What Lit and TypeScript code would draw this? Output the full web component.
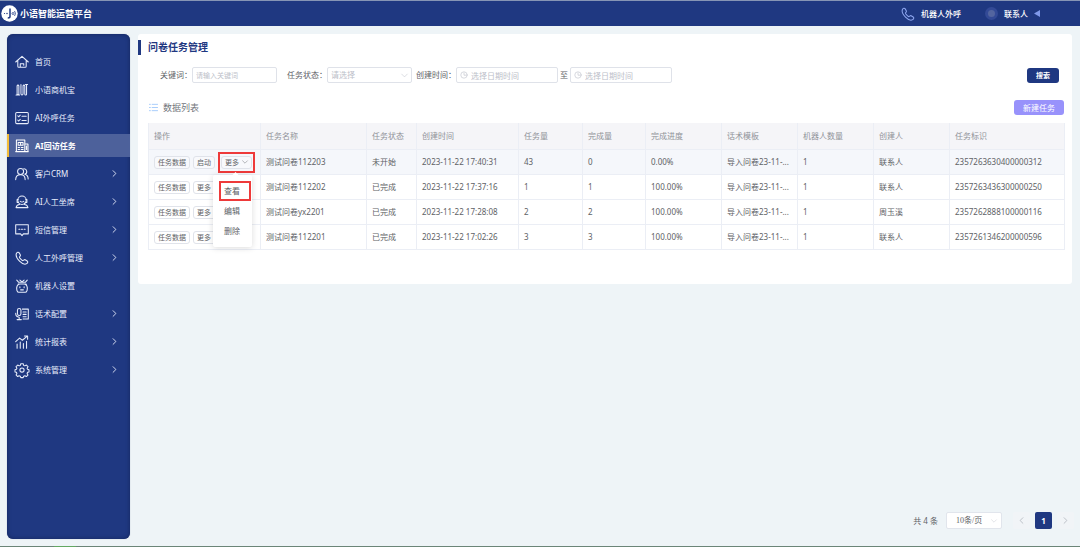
import { LitElement, html, css, svg, nothing } from "lit";
import { customElement } from "lit/decorators.js";
import { classMap } from "lit/directives/class-map.js";

const icons: Record<string, unknown> = {
  home: svg`<path d="M1 10 10 2l9 8M4 8v8q0 1.500 1.500 1.500h9q1.500 0 1.500-1.500V8M7.500 17v-4.500h5v2"/>`,
  biz: svg`<path d="M3 4v12.500h2.500V4a1.300 1.300 0 0 0-2.500 0M8.500 2v13.500a1.500 1.500 0 0 0 3 0V4a1.300 1.300 0 0 1 2.500 0v12a1.200 1.200 0 0 0 2.500 0V3M1.500 17h5M15 2h3"/>`,
  list: svg`<rect x="1" y="2" width="18" height="16" rx="1.500"/><path d="m4 7 1.300 1.300L7.500 6M4 13l1.300 1.300L7.500 12M10 7.500h6M10 13.500h6"/>`,
  visit: svg`<path d="M2 1.500h12V18H2zM14 7h4.500v11H14M4.500 5h7v4h-7zM8 5v4M4.500 12h2M9 12h2.500M4.500 15h2M9 15h2.500M16.300 10v5M1 18h18"/>`,
  people: svg`<circle cx="8" cy="6.500" r="4.300"/><path d="M1 18c0-4.500 2.700-7 7-7s6.500 2.500 6.500 7M12.500 2.500a4 4 0 0 1 1.500 7.800c3 .9 4.800 3.400 4.800 6.700"/>`,
  agent: svg`<circle cx="10" cy="7.500" r="6"/><path d="M4.500 6.500H3v4h2M15.500 6.500H17v4h-2l-2 2.500M7.500 9c1.500 1.200 3.500 1.200 5 0M1.500 18c.5-3 3-4.300 5-4.500M18.500 18c-.5-3-3-4.300-5-4.500M1.500 18h17"/>`,
  sms: svg`<path d="M1 2.500h18v13h-7L10 18l-2-2.500H1zM5.500 9h1.500M9.200 9h1.500M13 9h1.500"/>`,
  phone: svg`<path d="M2 3.500c1-1.800 3-2.300 4-.8l1.700 2.900c.6 1.300-1 2.100-1.300 3-.4 1.200 3.800 5.500 5.100 5.100.9-.3 1.800-1.900 3-1.300l2.900 1.800c1.500 1 .8 2.900-.8 3.900C11.500 21.500-.5 9.500 2 3.500z"/>`,
  robot: svg`<path d="M2.500 1.500 5 4.500M17.500 1.500 15 4.500M7 1.500l3 2.500 3-2.500M5 4.500h10M4.500 7h11l1 1.500M3 10c-2 5 .5 9 2.500 9h9c2 0 4.500-4 2.500-9-1-2-3-3-4-3H7c-1 0-3 1-4 3zM7 11v1.500M13 11v1.500M8 15.500h4"/>`,
  script: svg`<rect x="3.500" y="2" width="5" height="10" rx="2.500"/><path d="M1 9c0 3.500 2 5.500 5 5.500V18M3 18h6M10.500 3H19v14h-7.500M11.500 7H16M11.500 10.500H16M11.500 14H16"/>`,
  chart: svg`<path d="M1 9.500 6.500 4.500l4 3L17.500 1.500M13.500 1.500h4.500V6M3 19v-6M7.500 19v-9M12 19v-7M16.500 19V9"/>`,
  gear: svg`<circle cx="10" cy="10" r="3"/><path d="M8.300 1h3.400l.6 2.400 1.700.7 2.200-1.200 2.400 2.400-1.300 2.100.7 1.700 2 .6v3l-2 .6-.7 1.700 1.200 2.200-2.300 2.200-2.100-1.200-1.700.7-.7 2H8.300l-.7-2-1.700-.7-2.100 1.200-2.300-2.300L2.700 15 2 13.300 0 12.700v-3L2 9.100l.7-1.700-1.200-2.200 2.400-2.300L6 4.100l1.700-.7z"/>`,
  clock: svg`<circle cx="10" cy="10" r="8"/><path d="M10 5v5.500h4.500"/>`,
  right: svg`<path d="m6 2 8 8-8 8"/>`,
  left: svg`<path d="m14 2-8 8 8 8"/>`,
  down: svg`<path d="m2 6 8 8 8-8"/>`,
  rows: svg`<path d="M1 3h2M7 3h12M1 10h2M7 10h12M1 17h2M7 17h12"/>`,
};

const icon = (name: string, cls = "") =>
  html`<svg class="icon ${cls}" viewBox="0 0 20 20" aria-hidden="true">${icons[name]}</svg>`;

const menu: [string, string, boolean][] = [
  ["home", "首页", false],
  ["biz", "小语商机宝", false],
  ["list", "AI外呼任务", false],
  ["visit", "AI回访任务", false],
  ["people", "客户CRM", true],
  ["agent", "AI人工坐席", true],
  ["sms", "短信管理", true],
  ["phone", "人工外呼管理", true],
  ["robot", "机器人设置", false],
  ["script", "话术配置", true],
  ["chart", "统计报表", true],
  ["gear", "系统管理", true],
];

const columns: [string, number][] = [
  ["操作", 112],
  ["任务名称", 106],
  ["任务状态", 50],
  ["创建时间", 102],
  ["任务量", 64],
  ["完成量", 63],
  ["完成进度", 76],
  ["话术模板", 76],
  ["机器人数量", 76],
  ["创建人", 76],
  ["任务标识", 115],
];

const tasks: string[][] = [
  ["测试问卷112203", "未开始", "2023-11-22 17:40:31", "43", "0", "0.00%", "导入问卷23-11-...", "1", "联系人", "2357263630400000312"],
  ["测试问卷112202", "已完成", "2023-11-22 17:37:16", "1", "1", "100.00%", "导入问卷23-11-...", "1", "联系人", "2357263436300000250"],
  ["测试问卷yx2201", "已完成", "2023-11-22 17:28:08", "2", "2", "100.00%", "导入问卷23-11-...", "1", "周玉溪", "2357262888100000116"],
  ["测试问卷112201", "已完成", "2023-11-22 17:02:26", "3", "3", "100.00%", "导入问卷23-11-...", "1", "联系人", "2357261346200000596"],
];

const base = css`
  *, *::before, *::after { box-sizing: border-box; }
  button, input, select { font: inherit; color: inherit; margin: 0; }
  button { cursor: pointer; white-space: nowrap; }
  a { color: inherit; text-decoration: none; }
  .icon { display: block; flex: none; width: 14px; height: 14px; fill: none; stroke: currentColor; stroke-width: 1.5; stroke-linecap: round; stroke-linejoin: round; overflow: visible; }
`;

@customElement("app-sidebar")
class AppSidebar extends LitElement {
  static styles = [base, css`
    :host { display: block; background: #1f3881; color: #e8edfb; border-radius: 6px; box-shadow: inset 0 0 4px #14265c, 0 0 1px #8c98b8; padding: 16px 0; }
    .menu { display: flex; flex-direction: column; gap: 5px; }
    .item { display: flex; align-items: center; gap: 6px; height: 23px; padding: 0 12px 0 6px; border-left: 2px solid transparent; }
    .active { background: #4d619b; border-left-color: #f3bd3a; color: #fff; font-weight: 700; }
    .label { flex: 1; }
    .arrow { width: 7px; height: 7px; stroke-width: 2.5; }
  `];
  render() {
    return html`<nav class="menu">
      ${menu.map(([name, label, sub]) => html`
        <a href="#" class=${classMap({ item: true, active: name === "visit" })}>
          ${icon(name)}<span class="label">${label}</span>${sub ? icon("right", "arrow") : nothing}
        </a>`)}
    </nav>`;
  }
}

@customElement("task-filter")
class TaskFilter extends LitElement {
  static styles = [base, css`
    :host { display: block; }
    .form { display: flex; align-items: center; padding: 0 5px 0 12px; color: #606266; }
    .group { display: flex; align-items: center; }
    .first { margin-right: 10px; }
    .status { margin-right: 4px; }
    .to { margin: 0 2px; }
    .field { display: flex; align-items: center; gap: 3px; height: 16px; padding: 0 3px; border: 1px solid #dfe2e9; border-radius: 2px; background: #fff; color: #bcc0c9; }
    .text, .choice { width: 85px; }
    .text { font-size: 7px; }
    .date { width: 102px; }
    .input { flex: 1; width: 100%; min-width: 0; height: 14px; padding: 0; border: 0; outline: 0; background: none; appearance: none; }
    .input::placeholder { color: #bcc0c9; }
    .small { width: 7px; height: 7px; }
    .clock { width: 8px; height: 8px; }
    .search { margin-left: auto; width: 32px; height: 15px; padding: 0; border: 0; border-radius: 3px; background: #1f3881; color: #fff; font-size: 7px; font-weight: 700; line-height: 15px; }
  `];
  render() {
    return html`<form class="form" @submit=${(e: Event) => e.preventDefault()}>
      <div class="group first">
        <label for="key">关键词：</label>
        <span class="field text"><input class="input" id="key" placeholder="请输入关键词" /></span>
      </div>
      <div class="group status">
        <label for="status">任务状态：</label>
        <span class="field choice">
          <select class="input" id="status"><option>请选择</option></select>${icon("down", "small")}
        </span>
      </div>
      <div class="group">
        <label for="from">创建时间：</label>
        <span class="field date">${icon("clock", "clock")}<input class="input" id="from" placeholder="选择日期时间" /></span>
        <label class="to" for="to">至</label>
        <span class="field date">${icon("clock", "clock")}<input class="input" id="to" placeholder="选择日期时间" /></span>
      </div>
      <button class="search">搜索</button>
    </form>`;
  }
}

@customElement("task-table")
class TaskTable extends LitElement {
  static styles = [base, css`
    :host { display: block; }
    .table { width: 100%; table-layout: fixed; border-collapse: separate; border-spacing: 0; border: 1px solid #ebeef5; border-width: 0 0 0 1px; color: #606266; }
    .th, .td { padding: 0 5px; border: 1px solid #ebeef5; border-width: 0 1px 1px 0; text-align: left; font-weight: 400; white-space: nowrap; line-height: 12px; }
    .th { height: 27px; background: #f5f5f8; color: #909399; }
    .td { height: 25px; }
    .hover .td { background: #f5f7fb; }
    .ops { display: flex; align-items: center; gap: 3px; position: relative; }
    .op { display: flex; align-items: center; gap: 3px; height: 13px; padding: 0 3px; border: 1px solid #e0e3ea; border-radius: 3px; background: #fff; font-size: 7px; line-height: 11px; }
    .hover .op { background: #f8f9fc; }
    .small { width: 6px; height: 6px; }
    .marked { margin: -4px 0; padding: 2px 1px; border: 2px solid #ee3a3a; display: flex; }
    .drop { position: absolute; z-index: 2; left: 59px; top: 19px; width: 39px; padding: 6px; display: flex; flex-direction: column; background: #fff; border-radius: 2px; box-shadow: 0 1px 6px rgba(0, 0, 0, 0.14); }
    .drop::before { content: ""; position: absolute; left: 20px; top: -2px; width: 5px; height: 5px; background: #fff; transform: rotate(45deg); }
    .choice { height: 20px; padding: 0 3px; border: 2px solid transparent; background: none; text-align: left; line-height: 16px; }
    .picked { border-color: #ee3a3a; margin-right: -5px; }
  `];
  render() {
    return html`<table class="table">
      <colgroup>${columns.map(([, w]) => html`<col style="width:${w}px" />`)}</colgroup>
      <thead><tr>${columns.map(([name]) => html`<th class="th" scope="col">${name}</th>`)}</tr></thead>
      <tbody>
        ${tasks.map((task, i) => html`<tr class=${classMap({ hover: i === 0 })}>
          <td class="td"><div class="ops">
            <button class="op">任务数据</button>
            ${i === 0
              ? html`<button class="op">启动</button>
                <span class="marked"><button class="op" aria-expanded="true">更多${icon("down", "small")}</button></span>
                <div class="drop">
                  <button class="choice picked">查看</button>
                  <button class="choice">编辑</button>
                  <button class="choice">删除</button>
                </div>`
              : html`<button class="op">更多${icon("down", "small")}</button>`}
          </div></td>
          ${task.map((value) => html`<td class="td">${value}</td>`)}
        </tr>`)}
      </tbody>
    </table>`;
  }
}

@customElement("app-root")
class AppRoot extends LitElement {
  static styles = [base, css`
    :host { display: flex; flex-direction: column; min-height: 100vh; background: #eef4f7; font: 8px/12px "Noto Sans", "Noto Sans CJK SC", sans-serif; }
    .top { display: flex; align-items: center; height: 26px; padding: 0 39px 0 1px; border-top: 1px solid #8695b5; background: #1f3881; color: #fff; }
    .brand { display: flex; align-items: center; gap: 2px; margin: 0; font-size: 9px; font-weight: 700; }
    .logo { width: 17px; height: 17px; flex: none; }
    .link { display: flex; align-items: center; gap: 6px; font-weight: 500; }
    .call { margin-left: auto; margin-right: 24px; }
    .call .icon { color: #8ea6ef; }
    .avatar { width: 13px; height: 13px; border-radius: 50%; border: 3px solid #334a96; background: #53659f; }
    .tri { width: 7px; height: 7px; fill: #8099ea; }
    .body { flex: 1; display: flex; gap: 8px; padding: 8px 0 7px 7px; }
    .side { flex: none; width: 123px; }
    .main { flex: 1; min-width: 0; display: flex; flex-direction: column; justify-content: space-between; }
    .card { margin-right: 8px; padding: 6px 8px 34px 0; border-radius: 3px; background: #fff; }
    .title { margin: 0; padding-left: 7px; border-left: 3px solid #1f3881; color: #1f3881; font-size: 10px; line-height: 15px; font-weight: 700; }
    .content { padding-left: 10px; }
    .filter { padding-top: 12px; }
    .bar { display: flex; align-items: center; justify-content: space-between; padding: 17px 0 8px; }
    .caption { display: flex; align-items: center; gap: 5px; margin: 0; padding-left: 1px; color: #73767c; font-size: 9px; font-weight: 400; }
    .rows { width: 9px; height: 9px; color: #a0c8fa; stroke-width: 2; }
    .new { height: 15px; padding: 0 9px; border: 0; border-radius: 3px; background: #9892fb; color: #fff; line-height: 15px; }
    .pager { display: flex; align-items: center; justify-content: flex-end; gap: 5px; padding: 0 6px 10px 0; color: #606266; }
    .size { display: flex; align-items: center; width: 56px; height: 17px; margin: 0 6px 0 3px; padding: 0 4px 0 9px; border: 1px solid #e1e5ec; border-radius: 2px; background: #fff; font-family: "Liberation Serif", "Noto Sans CJK SC", serif; }
    .pick { flex: 1; min-width: 0; height: 15px; padding: 0; border: 0; background: none; appearance: none; }
    .small { width: 6px; height: 6px; color: #c0c4cc; }
    .page { display: flex; align-items: center; justify-content: center; width: 17px; height: 17px; padding: 0; border: 0; border-radius: 2px; background: #f1f4f7; }
    .page .icon { width: 7px; height: 7px; color: #b5b9c1; stroke-width: 2.5; }
    .current { background: #1f3881; color: #fff; font-weight: 700; }
    .edge { height: 1px; background: linear-gradient(90deg, #6b8578 5%, #62a862 5%, #62a862 7%, #6b8578 7%); }
  `];
  render() {
    return html`
      <header class="top">
        <h1 class="brand">
          <svg class="logo" viewBox="0 0 34 34" aria-hidden="true">
            <circle cx="17" cy="17" r="16.500" fill="#fff" />
            <path d="M18 7v16q0 3-4.500 3" fill="none" stroke="#1f3881" stroke-width="3" />
            <path d="M27 12q4 5 0 10" fill="none" stroke="#1f3881" stroke-width="1.500" />
            <circle cx="24" cy="17" r="2" fill="none" stroke="#1f3881" stroke-width="1.500" />
            <circle cx="12" cy="17" r="1.500" fill="#1f3881" /><circle cx="7" cy="17" r="1.200" fill="#1f3881" />
          </svg>小语智能运营平台
        </h1>
        <a class="link call" href="#">${icon("phone")}机器人外呼</a>
        <a class="link" href="#"><span class="avatar"></span>联系人
          <svg class="tri" viewBox="0 0 7 7" aria-hidden="true"><path d="M0 3.500 6 0v7z" /></svg>
        </a>
      </header>
      <div class="body">
        <app-sidebar class="side"></app-sidebar>
        <main class="main">
          <section class="card">
            <h2 class="title">问卷任务管理</h2>
            <div class="content">
              <task-filter class="filter"></task-filter>
              <div class="bar">
                <h3 class="caption">${icon("rows", "rows")}数据列表</h3>
                <button class="new">新建任务</button>
              </div>
              <task-table></task-table>
            </div>
          </section>
          <footer class="pager">
            <span>共 4 条</span>
            <span class="size">
              <select class="pick" aria-label="每页条数"><option>10条/页</option></select>${icon("down", "small")}
            </span>
            <button class="page" aria-label="上一页">${icon("left")}</button>
            <button class="page current">1</button>
            <button class="page" aria-label="下一页">${icon("right")}</button>
          </footer>
        </main>
      </div>
      <div class="edge"></div>
    `;
  }
}
